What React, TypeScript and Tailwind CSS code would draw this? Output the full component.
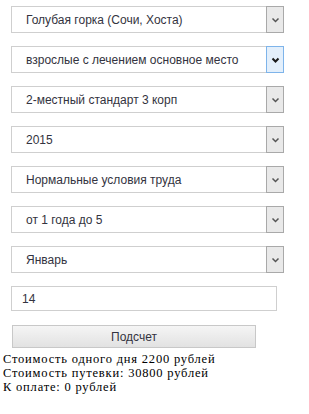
import React from "react";

const options = [
  "Голубая горка (Сочи, Хоста)",
  "взрослые с лечением основное место",
  "2-местный стандарт 3 корп",
  "2015",
  "Нормальные условия труда",
  "от 1 года до 5",
  "Январь",
];

const Chevron = ({ dark }: { dark?: boolean }) => (
  <svg width="9" height="6" viewBox="0 0 9 6">
    <path
      d="M1.5 1.5 L4.5 4.5 L7.5 1.5"
      fill="none"
      stroke={dark ? "#1a1a1a" : "#555"}
      strokeWidth={dark ? 2 : 1.5}
    />
  </svg>
);

const SelectBox = ({ label, active }: { label: string; active?: boolean }) => (
  <div className="flex h-[27px] w-[273px] border border-[#cfcfcf] bg-white">
    <div className="flex flex-1 items-center pl-[14px] text-[12px] text-[#333340]">
      {label}
    </div>
    <div
      className={
        active
          ? "flex w-[18px] items-center justify-center border border-[#7eb4ea] bg-[#e3effb] -m-px"
          : "flex w-[18px] items-center justify-center border border-[#a9a9a9] bg-[#e9e9e9] -m-px"
      }
    >
      <Chevron dark={active} />
    </div>
  </div>
);

export default function App() {
  return (
    <div className="bg-white h-[414px] w-[309px] font-['Liberation_Sans',Arial,sans-serif]">
      <div className="flex flex-col gap-[13px] pl-[11px] pt-[6px]">
        {options.map((o, i) => (
          <SelectBox key={i} label={o} active={i === 1} />
        ))}
        <div className="flex h-[25px] w-[266px] items-center border border-[#cfcfcf] bg-white pl-[10px] text-[12px] text-[#333340]">
          14
        </div>
        <div className="ml-[1px] mt-px flex h-[23px] w-[244px] items-center justify-center border border-[#c8c8c8] bg-gradient-to-b from-[#f5f5f5] to-[#e2e2e2] text-[12px] text-[#333340]">
          Подсчет
        </div>
      </div>
      <div className="mt-[4px] pl-[3px] font-['Liberation_Serif','Times_New_Roman',serif] text-[12.5px] leading-[14px] tracking-[0.8px] text-black">
        <div>Стоимость одного дня 2200 рублей</div>
        <div>Стоимость путевки: 30800 рублей</div>
        <div>К оплате: 0 рублей</div>
      </div>
    </div>
  );
}
